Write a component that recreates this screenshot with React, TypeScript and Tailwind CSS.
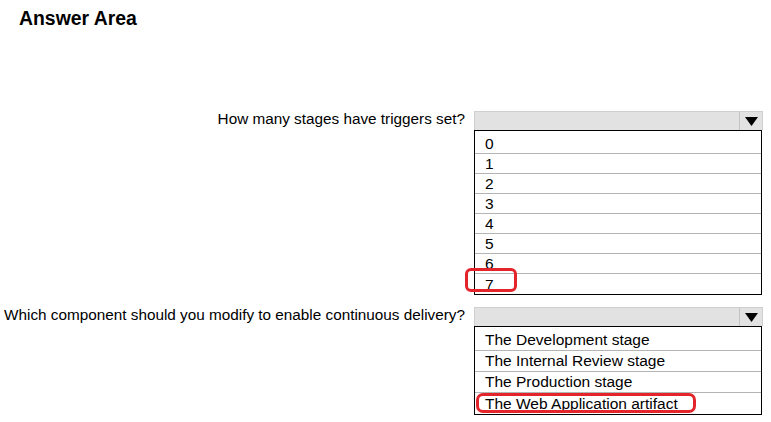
const font = { fontFamily: '"Liberation Sans", Arial, sans-serif' };

function Dropdown({
  question,
  options,
  rowClass,
  firstRowClass,
  highlight,
}: {
  question: string;
  options: string[];
  rowClass: string;
  firstRowClass: string;
  highlight: React.ReactNode;
}) {
  return (
    <div className="flex items-start">
      <div className="w-[474px] h-[19px] pr-[9px] pb-[3px] flex items-center justify-end text-[15.3px] text-black whitespace-nowrap">
        {question}
      </div>
      <div className="relative w-[289px]">
        <div className="h-[19px] flex bg-[#e2e2e2] border border-[#cfcfcf] border-b-0">
          <div className="flex-1" />
          <div className="w-[23px] border-l border-[#c4c4c4] flex items-center justify-center">
            <svg width="13" height="9" viewBox="0 0 13 9">
              <polygon points="0,0 13,0 6.5,9" fill="#000" />
            </svg>
          </div>
        </div>
        <div className="w-[288px] border border-black bg-white">
          {options.map((o, i) => (
            <div
              key={o}
              className={
                (i === 0 ? firstRowClass : rowClass) +
                " pl-[10px] flex text-[15.5px] leading-[18px] text-black " +
                (i < options.length - 1 ? "border-b border-[#b4b4b4]" : "")
              }
            >
              {o}
            </div>
          ))}
        </div>
        {highlight}
      </div>
    </div>
  );
}

export default function App() {
  return (
    <div className="w-[771px] h-[422px] bg-white" style={font}>
      <div className="pt-[6px] pl-[19px] text-[19.4px] font-bold text-black leading-[24px]">
        Answer Area
      </div>
      <div className="mt-[81px]">
        <Dropdown
          question="How many stages have triggers set?"
          options={["0", "1", "2", "3", "4", "5", "6", "7"]}
          firstRowClass="h-[23px] items-end"
          rowClass="h-[20px] items-end"
          highlight={
            <div className="absolute left-[-9px] top-[157px] w-[52px] h-[24px] rounded-[6px] border-[3px] border-[#e3242b]" />
          }
        />
      </div>
      <div className="mt-[12px]">
        <Dropdown
          question="Which component should you modify to enable continuous delivery?"
          options={[
            "The Development stage",
            "The Internal Review stage",
            "The Production stage",
            "The Web Application artifact",
          ]}
          firstRowClass="h-[24px] items-end pb-[1px]"
          rowClass="h-[21px] items-center"
          highlight={
            <div className="absolute left-[2px] top-[86px] w-[220px] h-[20px] rounded-[7px] border-[3px] border-[#e3242b]" />
          }
        />
      </div>
    </div>
  );
}
